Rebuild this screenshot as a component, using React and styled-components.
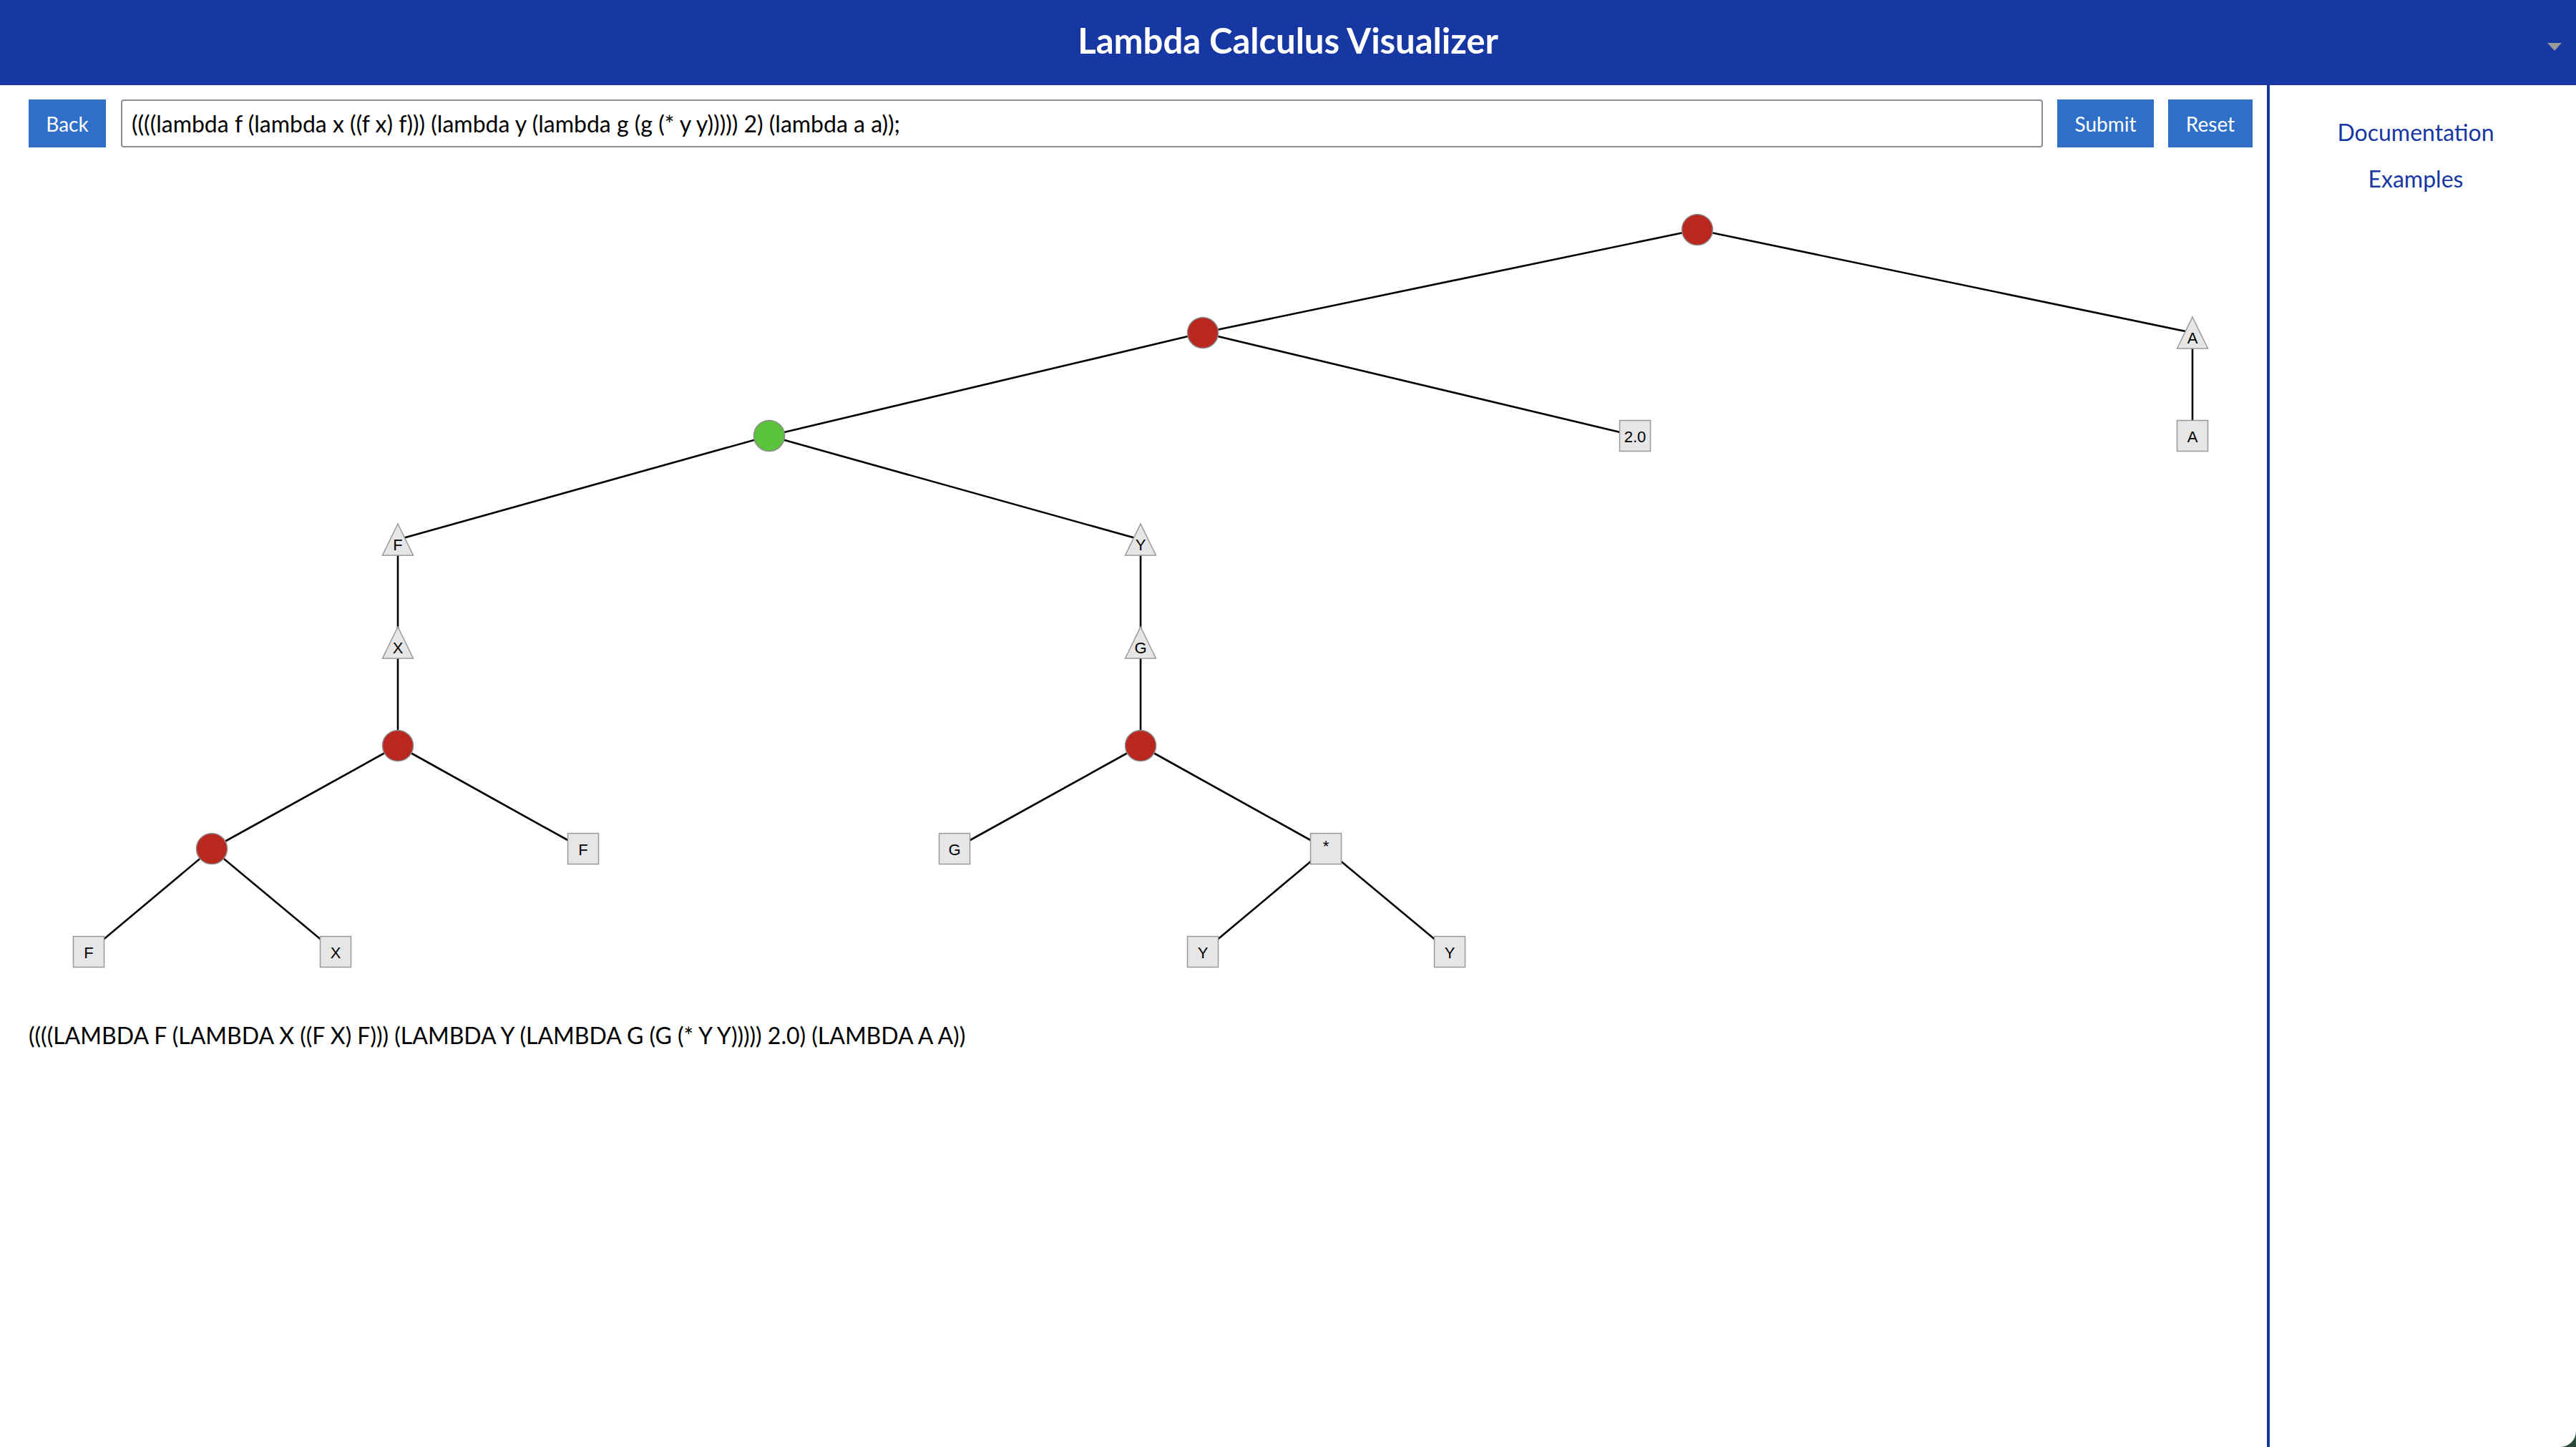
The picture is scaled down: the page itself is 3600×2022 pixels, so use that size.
import React from 'react';
import styled, { createGlobalStyle } from 'styled-components';

const GlobalStyle = createGlobalStyle`
  html, body {
    margin: 0;
    padding: 0;
    background: #2b4a3a;
  }
  #root {
    height: 2022px;
  }
`

const Page = styled.div`
  display: flex;
  flex-direction: column;
  height: 2022px;
  background: #fff;
  font-family: Lato, "Open Sans", sans-serif;
  border-bottom-right-radius: 22px;
  overflow: hidden;
`

const Header = styled.header`
  position: relative;
  height: 119px;
  flex: none;
  display: flex;
  align-items: center;
  justify-content: center;
  background: #1737a3;
  color: #fff;
`

const Title = styled.h1`
  margin: 0 0 8px;
  font-size: 49px;
  font-weight: 700;
`

const MenuArrow = styled.span`
  position: absolute;
  right: 20px;
  top: 60px;
  width: 0;
  height: 0;
  border-left: 10px solid transparent;
  border-right: 10px solid transparent;
  border-top: 11px solid #9a9a9a;
`

const Body = styled.div`
  flex: 1;
  display: flex;
  min-height: 0;
`

const Main = styled.main`
  flex: 1;
  display: flex;
  flex-direction: column;
  padding: 20px 20px 0 40px;
`

const Toolbar = styled.div`
  display: flex;
  align-items: stretch;
  height: 67px;
  gap: 20px;
`

const Button = styled.button`
  flex: none;
  width: ${p => p.$w}px;
  border: none;
  border-radius: 0;
  background: #2f6fc7;
  color: #fff;
  font-family: Lato, sans-serif;
  font-size: 28px;
  cursor: pointer;
`

const Input = styled.input`
  flex: 1;
  min-width: 0;
  margin-left: 1px;
  border: 2px solid #8e8c96;
  border-radius: 4px;
  padding: 0 13px;
  font-family: Lato, sans-serif;
  font-size: 32px;
  color: #000;
  outline: none;
`

const Canvas = styled.svg`
  display: block;
  margin-top: 20px;
  flex: none;
`

const Result = styled.div`
  margin-top: 52px;
  font-size: 32px;
  line-height: 1.2;
  color: #000;
`

const Sidebar = styled.aside`
  flex: none;
  box-sizing: border-box;
  width: 432px;
  border-left: 4px solid #1737a3;
  display: flex;
  flex-direction: column;
  align-items: center;
  padding: 46px 20px 0 0;
  gap: 26px;
`

const SideLink = styled.a`
  color: #1737a3;
  font-size: 32px;
  text-decoration: none;
  cursor: pointer;
`

const Y = [321, 465, 609, 754, 898, 1042, 1186, 1330];

const nodes = {
  root: { x: 2372, y: Y[0], kind: 'app' },
  app1: { x: 1681, y: Y[1], kind: 'app' },
  lamA: { x: 3064, y: Y[1], kind: 'lam', label: 'A' },
  redex: { x: 1075, y: Y[2], kind: 'redex' },
  num: { x: 2285, y: Y[2], kind: 'leaf', label: '2.0' },
  varA: { x: 3064, y: Y[2], kind: 'leaf', label: 'A' },
  lamF: { x: 556, y: Y[3], kind: 'lam', label: 'F' },
  lamY: { x: 1594, y: Y[3], kind: 'lam', label: 'Y' },
  lamX: { x: 556, y: Y[4], kind: 'lam', label: 'X' },
  lamG: { x: 1594, y: Y[4], kind: 'lam', label: 'G' },
  appL: { x: 556, y: Y[5], kind: 'app' },
  appR: { x: 1594, y: Y[5], kind: 'app' },
  appFX: { x: 296, y: Y[6], kind: 'app' },
  varF: { x: 815, y: Y[6], kind: 'leaf', label: 'F' },
  varG: { x: 1334, y: Y[6], kind: 'leaf', label: 'G' },
  mul: { x: 1853, y: Y[6], kind: 'leaf', label: '*' },
  varF2: { x: 124, y: Y[7], kind: 'leaf', label: 'F' },
  varX: { x: 469, y: Y[7], kind: 'leaf', label: 'X' },
  varY1: { x: 1681, y: Y[7], kind: 'leaf', label: 'Y' },
  varY2: { x: 2026, y: Y[7], kind: 'leaf', label: 'Y' },
};

const edges = [
  ['root', 'app1'], ['root', 'lamA'],
  ['app1', 'redex'], ['app1', 'num'],
  ['lamA', 'varA'],
  ['redex', 'lamF'], ['redex', 'lamY'],
  ['lamF', 'lamX'], ['lamY', 'lamG'],
  ['lamX', 'appL'], ['lamG', 'appR'],
  ['appL', 'appFX'], ['appL', 'varF'],
  ['appR', 'varG'], ['appR', 'mul'],
  ['appFX', 'varF2'], ['appFX', 'varX'],
  ['mul', 'varY1'], ['mul', 'varY2'],
];

const Label = ({ x, y, children }) => (
  <text
    x={x}
    y={y}
    textAnchor="middle"
    dominantBaseline="central"
    fontFamily='"Liberation Sans", Arial, sans-serif'
    fontSize="22"
    fill="#000"
  >
    {children}
  </text>
);

const Node = ({ node }) => {
  const { x, y, kind, label } = node;
  if (kind === 'app' || kind === 'redex') {
    return (
      <circle
        cx={x}
        cy={y}
        r="21.5"
        fill={kind === 'redex' ? '#5cc43c' : '#b9271e'}
        stroke="#8a8a8a"
        strokeWidth="1.5"
      />
    );
  }
  if (kind === 'lam') {
    return (
      <g>
        <polygon
          points={`${x},${y - 22} ${x + 21.5},${y + 22} ${x - 21.5},${y + 22}`}
          fill="#e6e6e6"
          stroke="#999"
          strokeWidth="1.5"
        />
        <Label x={x} y={y + 7}>{label}</Label>
      </g>
    );
  }
  return (
    <g>
      <rect x={x - 21.5} y={y - 21.5} width="43" height="43" fill="#e6e6e6" stroke="#999" strokeWidth="1.5" />
      <Label x={x} y={label === '*' ? y - 4 : y + 1}>{label}</Label>
    </g>
  );
};

const Tree = () => (
  <Canvas width="3108" height="1150" viewBox="40 226 3108 1150">
    {edges.map(([a, b]) => (
      <line
        key={a + b}
        x1={nodes[a].x}
        y1={nodes[a].y}
        x2={nodes[b].x}
        y2={nodes[b].y}
        stroke="#000"
        strokeWidth="2.6"
      />
    ))}
    {Object.entries(nodes).map(([k, n]) => (
      <Node key={k} node={n} />
    ))}
  </Canvas>
);

export default function App() {
  return (
    <>
      <GlobalStyle />
      <Page>
        <Header>
          <Title>Lambda Calculus Visualizer</Title>
          <MenuArrow />
        </Header>
        <Body>
          <Main>
            <Toolbar>
              <Button $w={108}>Back</Button>
              <Input defaultValue="((((lambda f (lambda x ((f x) f))) (lambda y (lambda g (g (* y y))))) 2) (lambda a a));" />
              <Button $w={135}>Submit</Button>
              <Button $w={118}>Reset</Button>
            </Toolbar>
            <Tree />
            <Result>((((LAMBDA F (LAMBDA X ((F X) F))) (LAMBDA Y (LAMBDA G (G (* Y Y))))) 2.0) (LAMBDA A A))</Result>
          </Main>
          <Sidebar>
            <SideLink>Documentation</SideLink>
            <SideLink>Examples</SideLink>
          </Sidebar>
        </Body>
      </Page>
    </>
  );
}
